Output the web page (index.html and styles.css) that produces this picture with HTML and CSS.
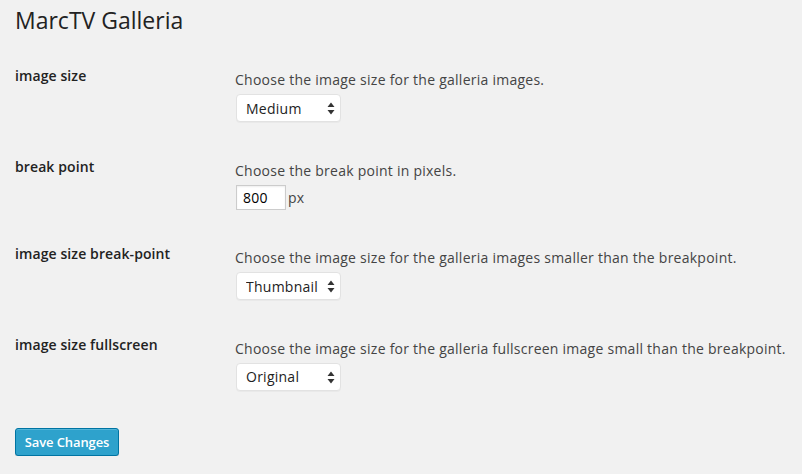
FILE: index.html
```html
<!DOCTYPE html>
<html>
<head>
<meta charset="utf-8">
<link rel="stylesheet" href="styles.css">
</head>
<body>
<div class="wrap">
  <h1 class="title">MarcTV Galleria</h1>
  <form class="settings">
    <div class="row">
      <div class="label">image size</div>
      <div class="field">
        <p class="desc">Choose the image size for the galleria images.</p>
        <span class="select-wrap">
          <select class="select"><option>Medium</option></select>
          <svg class="arrows" width="8" height="13" viewBox="0 0 8 13"><path d="M4 0.5 L7.5 5 L0.5 5 Z M4 12.5 L7.5 8 L0.5 8 Z" fill="#333"/></svg>
        </span>
      </div>
    </div>
    <div class="row">
      <div class="label">break point</div>
      <div class="field">
        <p class="desc">Choose the break point in pixels.</p>
        <div class="inline"><input class="text" type="text" value="800"><span class="unit">px</span></div>
      </div>
    </div>
    <div class="row">
      <div class="label">image size break-point</div>
      <div class="field">
        <p class="desc">Choose the image size for the galleria images smaller than the breakpoint.</p>
        <span class="select-wrap">
          <select class="select"><option>Thumbnail</option></select>
          <svg class="arrows" width="8" height="13" viewBox="0 0 8 13"><path d="M4 0.5 L7.5 5 L0.5 5 Z M4 12.5 L7.5 8 L0.5 8 Z" fill="#333"/></svg>
        </span>
      </div>
    </div>
    <div class="row">
      <div class="label">image size fullscreen</div>
      <div class="field">
        <p class="desc">Choose the image size for the galleria fullscreen image small than the breakpoint.</p>
        <span class="select-wrap">
          <select class="select"><option>Original</option></select>
          <svg class="arrows" width="8" height="13" viewBox="0 0 8 13"><path d="M4 0.5 L7.5 5 L0.5 5 Z M4 12.5 L7.5 8 L0.5 8 Z" fill="#333"/></svg>
        </span>
      </div>
    </div>
    <div class="actions">
      <button type="button" class="button-primary">Save Changes</button>
    </div>
  </form>
</div>
</body>
</html>
```
FILE: styles.css
```css
html, body {
  margin: 0;
  padding: 0;
  background: #f1f1f1;
}
body {
  font-family: "Open Sans", "Liberation Sans", sans-serif;
  font-size: 14px;
  color: #444;
}
.wrap {
  padding: 6px 15px 0 15px;
}
.title {
  margin: 0;
  font-size: 23px;
  font-weight: 400;
  line-height: 29px;
  color: #222;
}
.settings {
  margin-top: 19px;
}
.row {
  display: flex;
  align-items: flex-start;
}
.label {
  width: 220px;
  flex: none;
  padding-top: 13px;
  font-weight: 600;
  line-height: 18.2px;
  letter-spacing: 0.1px;
  color: #222;
}
.field {
  padding: 15px 0 22.5px 0;
}
.desc {
  margin: 0;
  line-height: 21px;
  letter-spacing: 0.25px;
}
.select-wrap {
  position: relative;
  display: inline-block;
  margin: 4px 0 0 1px;
  vertical-align: top;
}
.select {
  display: block;
  -webkit-appearance: none;
  appearance: none;
  width: 105px;
  height: 28px;
  margin: 0;
  padding: 0 20px 0 9px;
  border: 1px solid #e2e2e2;
  border-radius: 4px;
  background: #fff;
  font-family: "Open Sans", "Liberation Sans", sans-serif;
  font-size: 14px;
  letter-spacing: 0.25px;
  color: #222;
  box-shadow: 0 1px 0 rgba(0,0,0,0.03);
}
.arrows {
  position: absolute;
  right: 6px;
  top: 8px;
  pointer-events: none;
}
.inline {
  display: flex;
  align-items: center;
  margin: 4px 0 0 1px;
}
.text {
  box-sizing: border-box;
  width: 50px;
  height: 25px;
  margin: 0;
  padding: 0 6px;
  border: 1px solid #ccc;
  border-radius: 0;
  background: #fff;
  font-family: "Open Sans", "Liberation Sans", sans-serif;
  font-size: 14px;
  letter-spacing: 0.25px;
  color: #000;
  box-shadow: inset 0 1px 2px rgba(0,0,0,0.07);
}
.unit {
  margin-left: 2px;
  color: #444;
  letter-spacing: 0.25px;
}
.actions {
  padding-top: 15px;
}
.button-primary {
  box-sizing: border-box;
  height: 28px;
  width: 104px;
  margin: 0;
  padding: 0 0 1px;
  white-space: nowrap;
  border: 1px solid #0074a2;
  border-radius: 3px;
  background: #2ea2cc;
  box-shadow: inset 0 1px 0 rgba(120,200,230,0.5), 0 1px 0 rgba(0,0,0,0.15);
  color: #fff;
  font-family: "Open Sans", "Liberation Sans", sans-serif;
  font-size: 13px;
  font-weight: 600;
  letter-spacing: -0.1px;
  line-height: 26px;
  text-align: center;
}
```
